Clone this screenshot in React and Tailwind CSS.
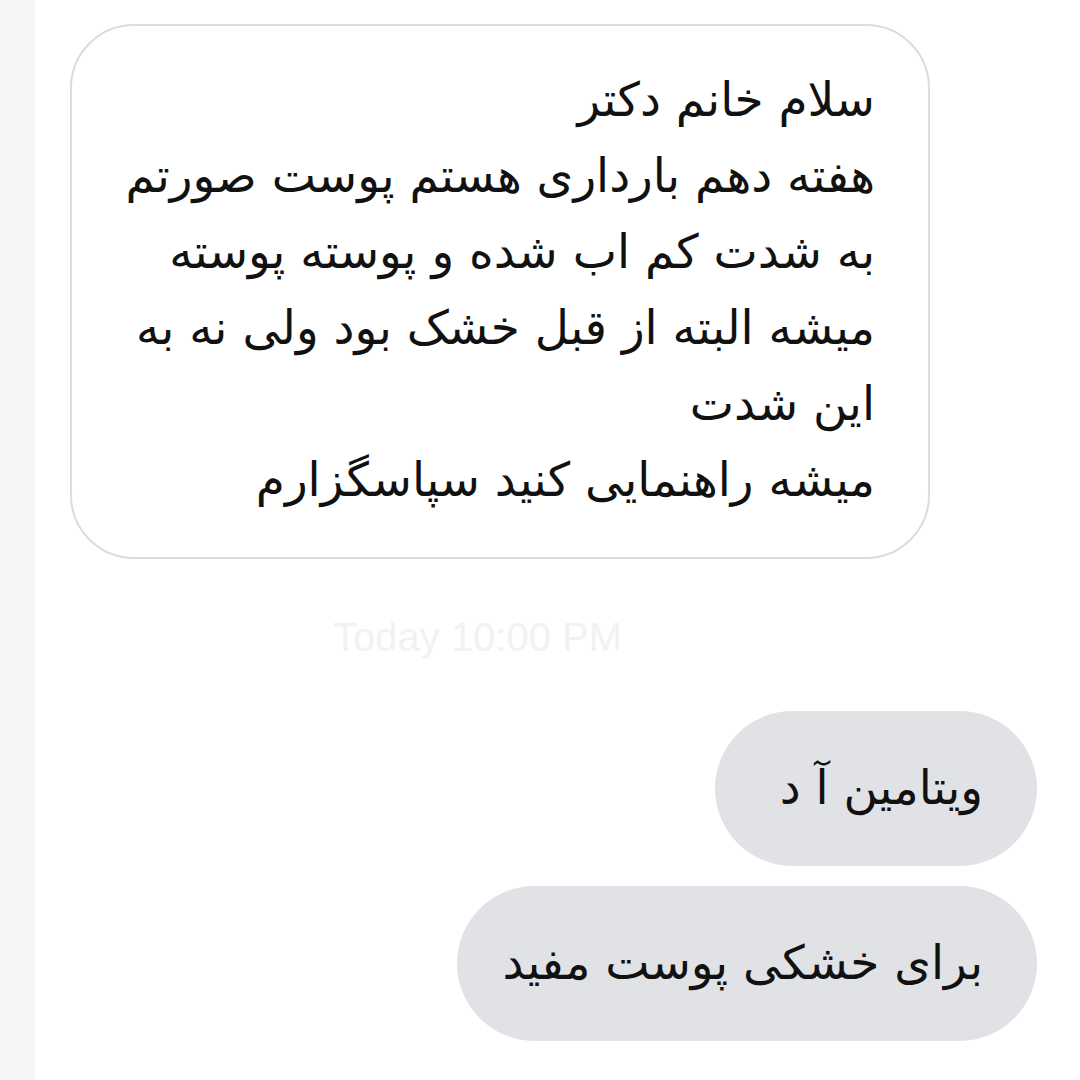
import React from "react";

const lines = [
  "سلام خانم دکتر",
  "هفته دهم بارداری هستم پوست صورتم",
  "به شدت کم اب شده و پوسته پوسته",
  "میشه البته از قبل خشک بود ولی نه به",
  "این شدت",
  "میشه راهنمایی کنید سپاسگزارم",
];

export default function App() {
  return (
    <div className="w-[1080px] h-[1080px] flex bg-white overflow-hidden" style={{ fontFamily: '"DejaVu Sans", sans-serif' }}>
      <div className="w-[35px] shrink-0 bg-[#f6f6f6]" />
      <div className="flex-1 flex flex-col">
        <div className="ml-[35px] mt-[24px] w-[860px] h-[535px] rounded-[64px] border-2 border-[#dcdcdc] bg-white pt-[36px] pr-[53px]">
          <div dir="rtl" className="text-[47px] leading-[76px] text-[#111] text-right">
            {lines.map((l, i) => (
              <div key={i} className="h-[76px] flex items-center whitespace-nowrap">{l}</div>
            ))}
          </div>
        </div>
        <div className="mt-[58px] ml-[298px] text-[40px] leading-[40px] text-[#f2f2f2]" style={{ fontFamily: '"Liberation Sans", sans-serif' }}>
          Today 10:00 PM
        </div>
        <div className="mt-[54px] flex flex-col items-end gap-[20px] pr-[43px]">
          <div dir="rtl" className="w-[322px] h-[155px] rounded-full bg-[#e0e2e5] flex items-center pr-[54px] text-[47px] text-[#111] whitespace-nowrap">
            ویتامین آ د
          </div>
          <div dir="rtl" className="w-[580px] h-[155px] rounded-full bg-[#e0e2e5] flex items-center pr-[54px] text-[47px] text-[#111] whitespace-nowrap">
            برای خشکی پوست مفید
          </div>
        </div>
      </div>
    </div>
  );
}
